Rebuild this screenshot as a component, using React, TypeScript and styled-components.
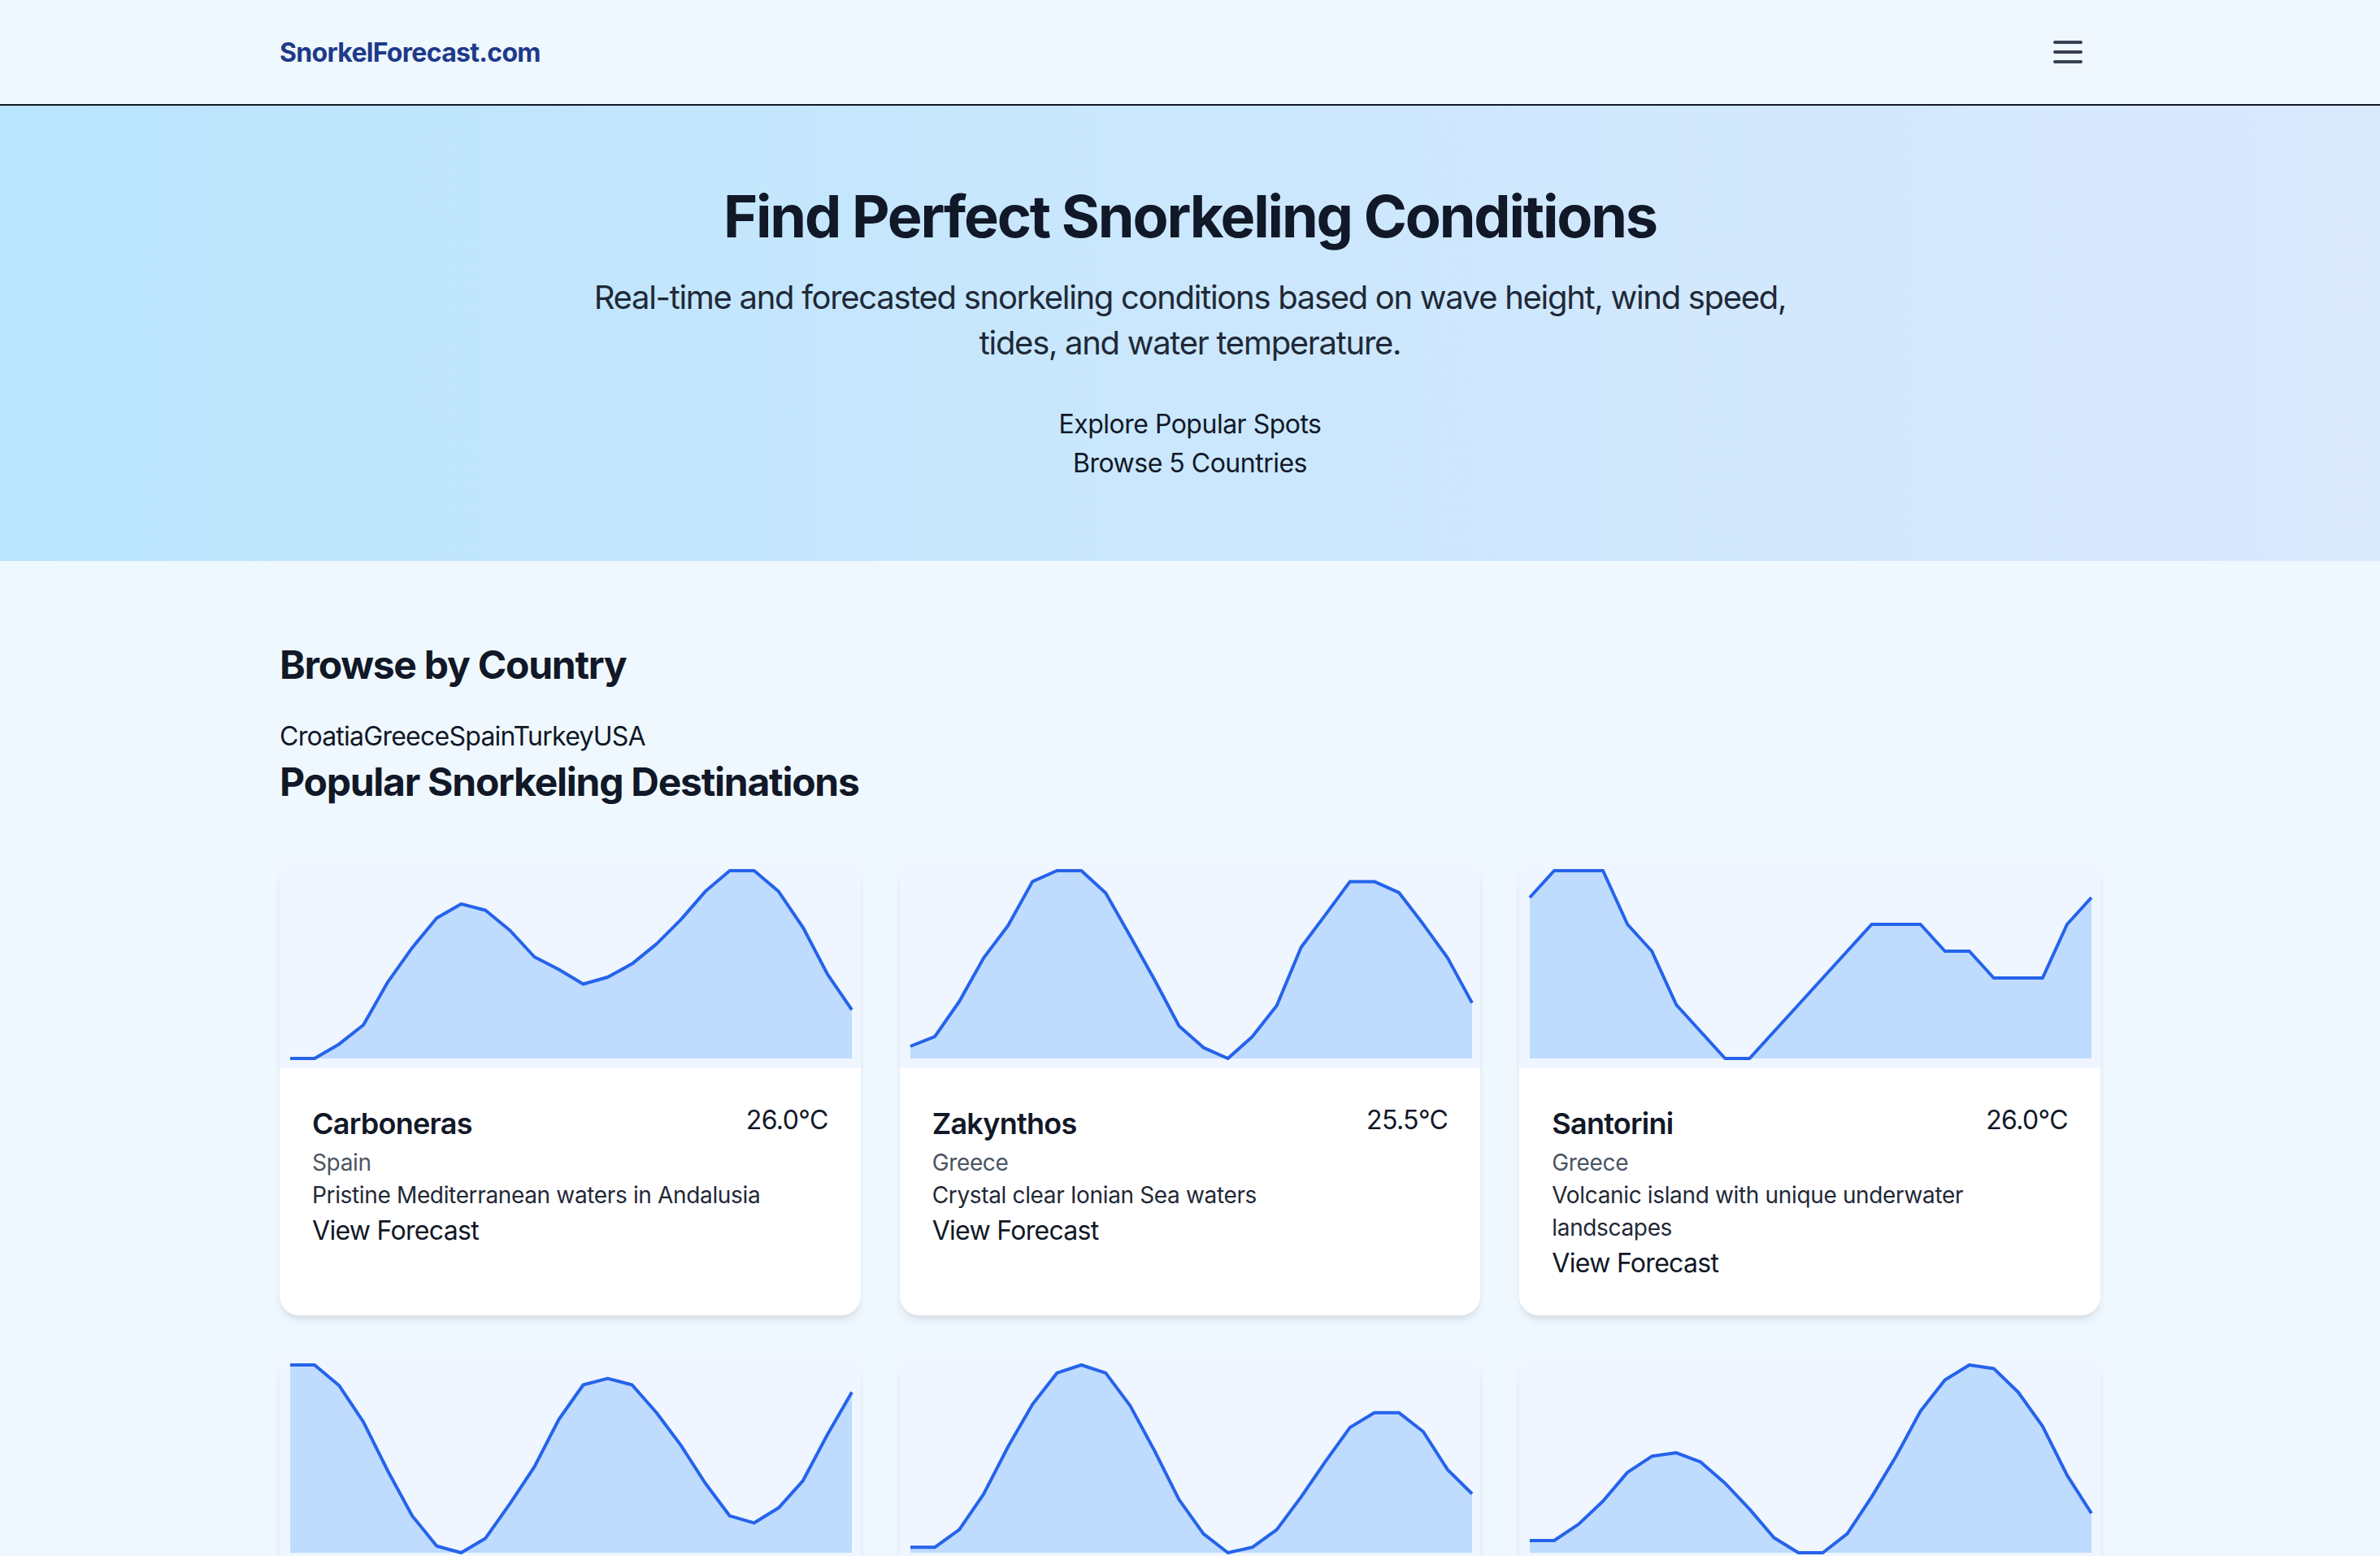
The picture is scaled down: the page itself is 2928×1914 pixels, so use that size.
import styled, { createGlobalStyle } from "styled-components";

type Spot = {
  name: string;
  country: string;
  description: string;
  temp: string;
  tide: number[];
};

const spots: Spot[] = [
  {
    name: "Carboneras",
    country: "Spain",
    description: "Pristine Mediterranean waters in Andalusia",
    temp: "26.0°C",
    tide: [0, 0, 0.076, 0.179, 0.408, 0.59, 0.748, 0.823, 0.789, 0.682, 0.541, 0.474, 0.396, 0.433, 0.504, 0.61, 0.74, 0.889, 1, 1, 0.889, 0.698, 0.449, 0.259],
  },
  {
    name: "Zakynthos",
    country: "Greece",
    description: "Crystal clear Ionian Sea waters",
    temp: "25.5°C",
    tide: [0.065, 0.116, 0.303, 0.535, 0.708, 0.942, 1, 1, 0.881, 0.652, 0.419, 0.173, 0.058, 0, 0.116, 0.282, 0.592, 0.766, 0.942, 0.942, 0.884, 0.715, 0.535, 0.296],
  },
  {
    name: "Santorini",
    country: "Greece",
    description: "Volcanic island with unique underwater landscapes",
    temp: "26.0°C",
    tide: [6, 7, 7, 7, 5, 4, 2, 1, 0, 0, 1, 2, 3, 4, 5, 5, 5, 4, 4, 3, 3, 3, 5, 6].map((v) => v / 7),
  },
  {
    name: "Kaş",
    country: "Turkey",
    description: "Turquoise coves along the Lycian coast",
    temp: "25.0°C",
    tide: [1, 1, 0.891, 0.696, 0.435, 0.196, 0.036, 0, 0.077, 0.261, 0.457, 0.71, 0.894, 0.928, 0.894, 0.746, 0.572, 0.37, 0.196, 0.159, 0.239, 0.384, 0.63, 0.855],
  },
  {
    name: "Hvar",
    country: "Croatia",
    description: "Sheltered bays on the Dalmatian islands",
    temp: "24.5°C",
    tide: [0.029, 0.029, 0.123, 0.312, 0.565, 0.79, 0.957, 1, 0.957, 0.783, 0.543, 0.283, 0.101, 0, 0.029, 0.123, 0.297, 0.486, 0.667, 0.746, 0.746, 0.645, 0.442, 0.314],
  },
  {
    name: "Hanauma Bay",
    country: "USA",
    description: "Protected marine life conservation area",
    temp: "25.5°C",
    tide: [0.065, 0.065, 0.152, 0.275, 0.428, 0.514, 0.532, 0.483, 0.37, 0.232, 0.08, 0, 0, 0.101, 0.297, 0.514, 0.754, 0.92, 1, 0.981, 0.855, 0.674, 0.413, 0.21],
  },
];

const countries = ["Croatia", "Greece", "Spain", "Turkey", "USA"];

const CHART_W = 691;
const CHART_H = 231;

const TideChart = ({ values }: { values: number[] }) => {
  const step = CHART_W / (values.length - 1);
  const pts = values.map((v, i) => `${(i * step).toFixed(1)},${((1 - v) * CHART_H).toFixed(1)}`);
  const area = `M0,${CHART_H} L${pts.join(" L")} L${CHART_W},${CHART_H} Z`;
  return (
    <svg width={CHART_W} height={CHART_H} viewBox={`0 0 ${CHART_W} ${CHART_H}`} style={{ overflow: "visible", display: "block" }}>
      <path d={area} fill="#bfdbfe" />
      <polyline points={pts.join(" ")} fill="none" stroke="#2563eb" strokeWidth={4} strokeLinejoin="round" />
    </svg>
  );
};

const App = () => {
  return (
    <>
      <GlobalStyle />
      <Header>
        <HeaderInner>
          <Logo href="#">SnorkelForecast.com</Logo>
          <MenuButton aria-label="menu">
            <svg width="48" height="48" viewBox="0 0 24 24" fill="none" stroke="#374151" strokeWidth="2" strokeLinecap="round">
              <path d="M4 6h16M4 12h16M4 18h16" />
            </svg>
          </MenuButton>
        </HeaderInner>
      </Header>

      <Hero>
        <HeroTitle>Find Perfect Snorkeling Conditions</HeroTitle>
        <HeroText>
          Real-time and forecasted snorkeling conditions based on wave height, wind speed, tides, and water temperature.
        </HeroText>
        <HeroLinks>
          <a href="#">Explore Popular Spots</a>
          <a href="#">Browse 5 Countries</a>
        </HeroLinks>
      </Hero>

      <Main>
        <SectionTitle $gap={32}>Browse by Country</SectionTitle>
        <CountryList>
          {countries.map((c) => (
            <a key={c} href="#">
              {c}
            </a>
          ))}
        </CountryList>
        <SectionTitle $gap={64}>Popular Snorkeling Destinations</SectionTitle>
        <CardGrid>
          {spots.map((spot) => (
            <Card key={spot.name}>
              <ChartArea>
                <TideChart values={spot.tide} />
              </ChartArea>
              <CardBody>
                <CardHead>
                  <SpotName>{spot.name}</SpotName>
                  <Temp>{spot.temp}</Temp>
                </CardHead>
                <Country>{spot.country}</Country>
                <Description>{spot.description}</Description>
                <ForecastLink href="#">View Forecast</ForecastLink>
              </CardBody>
            </Card>
          ))}
        </CardGrid>
      </Main>
    </>
  );
};

const GlobalStyle = createGlobalStyle`
  * {
    box-sizing: border-box;
  }
  body {
    margin: 0;
    background: #f0f8ff;
    color: #111827;
    font-family: Inter, "Noto Sans", sans-serif;
  }
  a {
    color: inherit;
    text-decoration: none;
  }
`;

const Container = styled.div`
  max-width: 2304px;
  margin: 0 auto;
  padding: 0 32px;
`;

const Header = styled.header`
  background: #f0f8ff;
  border-bottom: 2px solid #111827;
`;

const HeaderInner = styled(Container)`
  height: 128px;
  display: flex;
  align-items: center;
  justify-content: space-between;
`;

const Logo = styled.a`
  font-size: 32px;
  font-weight: 700;
  color: #1e3a8a;
  letter-spacing: -0.7px;
`;

const MenuButton = styled.button`
  display: flex;
  padding: 16px;
  border: none;
  background: none;
`;

const Hero = styled.section`
  background: linear-gradient(to right, #b9e5fd, #dbe9fd);
  padding: 96px 32px;
  display: flex;
  flex-direction: column;
  align-items: center;
  text-align: center;
`;

const HeroTitle = styled.h1`
  margin: 0 0 32px;
  font-size: 72px;
  line-height: 80px;
  font-weight: 700;
  letter-spacing: -2.2px;
  color: #111827;
`;

const HeroText = styled.p`
  margin: 0 0 48px;
  max-width: 1536px;
  font-size: 40px;
  line-height: 56px;
  letter-spacing: -1.3px;
  color: #1f2937;
`;

const HeroLinks = styled.div`
  display: flex;
  flex-direction: column;
  font-size: 32px;
  line-height: 48px;
  letter-spacing: -0.5px;
`;

const Main = styled(Container)`
  padding-top: 96px;
  padding-bottom: 96px;
`;

const SectionTitle = styled.h2<{ $gap: number }>`
  margin: 0 0 ${(p) => p.$gap}px;
  font-size: 48px;
  line-height: 64px;
  font-weight: 700;
  letter-spacing: -1.25px;
  color: #111827;
`;

const CountryList = styled.div`
  font-size: 32px;
  line-height: 48px;
  letter-spacing: -0.75px;
`;

const CardGrid = styled.div`
  display: grid;
  grid-template-columns: repeat(3, 1fr);
  gap: 48px;
`;

const Card = styled.article`
  background: #fff;
  border-radius: 24px;
  overflow: hidden;
  box-shadow: 0 8px 12px -2px rgba(0, 0, 0, 0.08), 0 4px 8px -4px rgba(0, 0, 0, 0.08);
`;

const ChartArea = styled.div`
  height: 256px;
  background: #eff6ff;
  padding: 13px 10px 12px 13px;
`;

const CardBody = styled.div`
  padding: 40px;
`;

const CardHead = styled.div`
  display: flex;
  justify-content: space-between;
  align-items: flex-start;
`;

const SpotName = styled.h3`
  margin: 0;
  font-size: 36px;
  line-height: 56px;
  font-weight: 600;
  letter-spacing: -0.75px;
  color: #111827;
`;

const Temp = styled.span`
  font-size: 32px;
  line-height: 48px;
  letter-spacing: -0.6px;
  color: #111827;
`;

const Country = styled.p`
  margin: 0;
  font-size: 28px;
  line-height: 40px;
  letter-spacing: -0.35px;
  color: #4b5563;
`;

const Description = styled.p`
  margin: 0;
  font-size: 28px;
  line-height: 40px;
  letter-spacing: -0.35px;
  color: #1f2937;
`;

const ForecastLink = styled.a`
  display: block;
  font-size: 32px;
  line-height: 48px;
  letter-spacing: -0.7px;
  color: #111827;
`;

export default App;
